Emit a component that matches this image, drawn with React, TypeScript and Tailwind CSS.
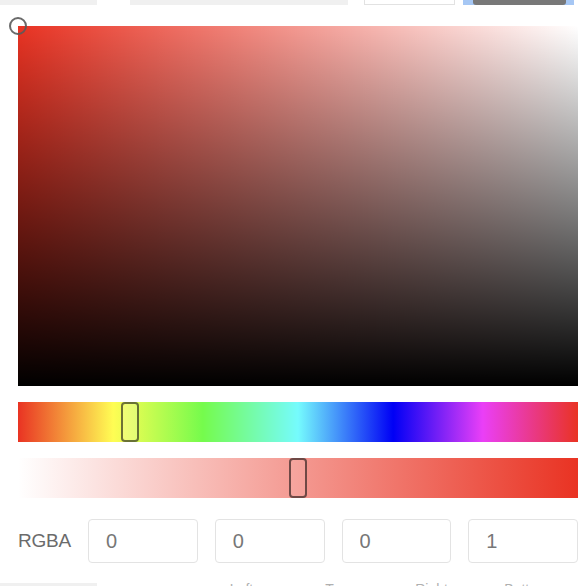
export default function App() {
  const hue = '#e93323';

  return (
    <div
      className="w-[588px] h-[586px] overflow-hidden bg-white flex flex-col"
      style={{ fontFamily: '"Liberation Sans", Arial, sans-serif' }}
    >
      {/* strip of the row above, cut off */}
      <div className="flex h-[5px] shrink-0">
        <div className="w-[97px] bg-[#f0f0f0]" />
        <div className="ml-[33px] w-[218px] bg-[#f0f0f0]" />
        <div className="ml-[16px] w-[91px] border-x border-b border-[#e2e2e2]" />
        <div className="ml-[8px] w-[111px] bg-[#a6c7f4] pl-[10px] pr-[8px]">
          <div className="h-full bg-[#787878] rounded-b-[3px]" />
        </div>
      </div>

      <div className="pl-[18px] pr-[10px] flex flex-col">
        {/* saturation / value area */}
        <div
          className="relative mt-[21px] h-[360px] w-full"
          style={{
            background: `linear-gradient(to top, #000, rgba(0,0,0,0)), linear-gradient(to left, #fff, rgba(255,255,255,0)), ${hue}`,
          }}
        >
          <div className="absolute -left-[9px] -top-[9px] w-[18px] h-[18px] rounded-full border-2 border-[#5a5a5a]/90" />
        </div>

        {/* hue slider */}
        <div className="relative mt-[16px] h-[40px] w-full bg-[linear-gradient(to_right,#e93323_0%,#fffd54_17%,#75fb4c_33%,#75fbfd_50%,#0000f5_67%,#ea3ff7_83%,#e93323_100%)]">
          <div className="absolute left-[103px] top-0 h-[40px] w-[18px] rounded-[4px] border-2 border-black/55 bg-white/20" />
        </div>

        {/* alpha slider */}
        <div className="relative mt-[16px] h-[40px] w-full bg-[linear-gradient(to_right,rgba(233,51,35,0),#e93323)]">
          <div className="absolute left-[271px] top-0 h-[40px] w-[18px] rounded-[4px] border-2 border-black/55 bg-white/10" />
        </div>

        {/* RGBA inputs */}
        <div className="mt-[21px] flex items-center gap-[17px]">
          <span className="text-[19px] text-[#6b6b6b] tracking-[-0.2px]">RGBA</span>
          <div className="flex flex-1 gap-[17px]">
            {['0', '0', '0', '1'].map((v, i) => (
              <input
                key={i}
                readOnly
                value={v}
                className="h-[44px] w-0 flex-1 rounded-[4px] border border-[#e3e3e3] px-[17px] text-[20px] text-[#777] outline-none"
                style={{ fontFamily: '"Liberation Sans", Arial, sans-serif' }}
              />
            ))}
          </div>
        </div>
      </div>

      {/* next row, cut off */}
      <div className="mt-[19px] flex items-start">
        <div className="mt-[1px] h-[4px] w-[97px] bg-[#f0f0f0]" />
        <div className="ml-[97px] grid grid-cols-[95px_95px_95px_95px] text-center text-[14px] leading-[14px] text-[#b0b0b0]">
          <span>Left</span>
          <span>Top</span>
          <span>Right</span>
          <span>Bottom</span>
        </div>
      </div>
    </div>
  );
}
